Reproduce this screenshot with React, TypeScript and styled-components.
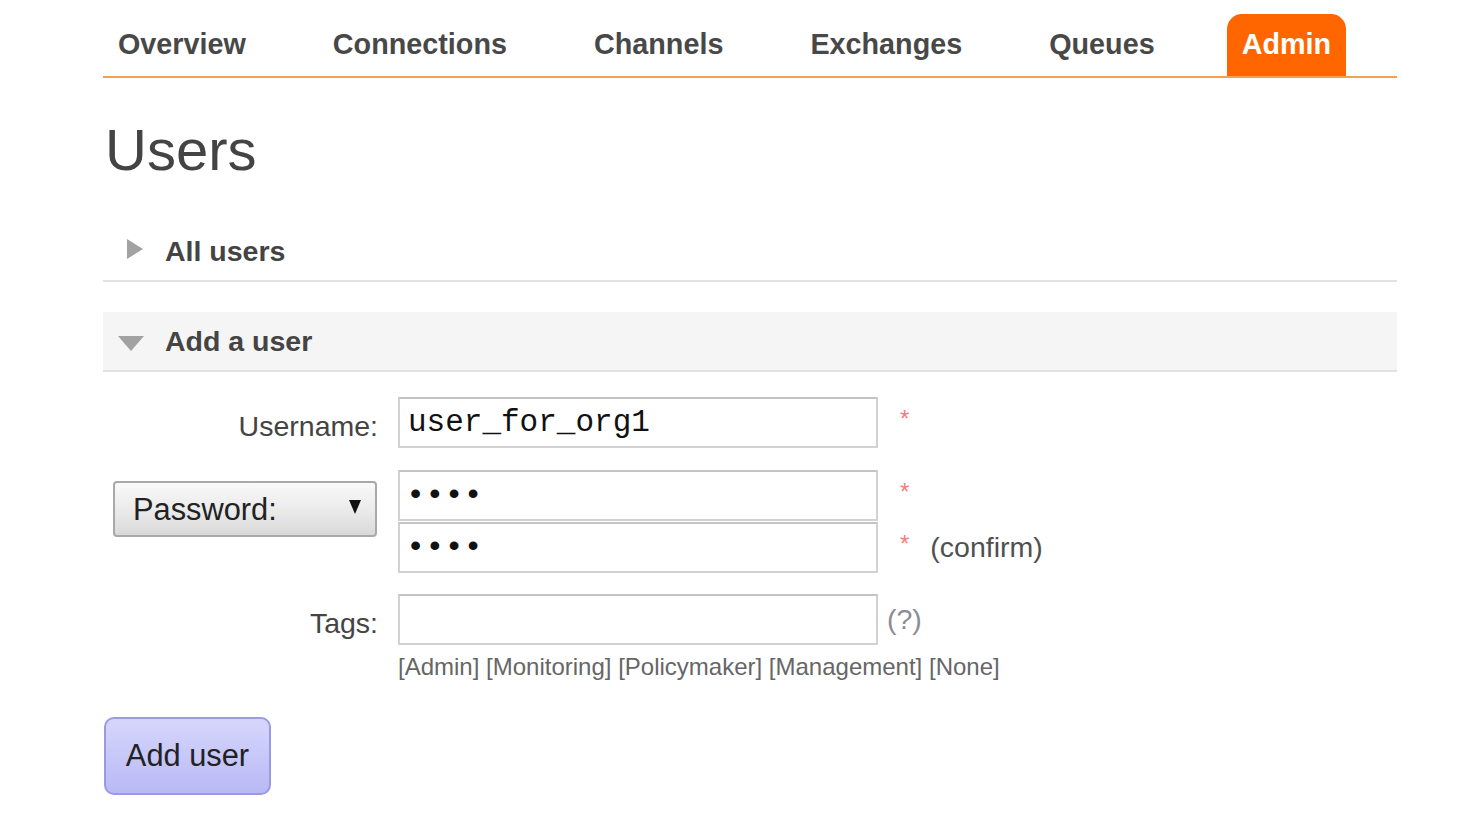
import React from 'react';
import styled, { createGlobalStyle } from 'styled-components';

const Global = createGlobalStyle`
  html, body { margin: 0; padding: 0; background: #fff; }
  body { font-family: "Liberation Sans", Arial, sans-serif; color: #484848; }
  * { box-sizing: border-box; }
`;

const Page = styled.div`
  width: 1294px;
  margin-left: 103px;
`;

const Nav = styled.nav`
  display: flex;
  padding-top: 14px;
  border-bottom: 2px solid #f5a04c;
`;

const Tab = styled.a<{ $active?: boolean }>`
  display: block;
  height: 62px;
  line-height: 60px;
  padding: 0 15px;
  margin-right: 57px;
  font-size: 28.75px;
  font-weight: bold;
  color: ${(p) => (p.$active ? '#fff' : '#484848')};
  background: ${(p) => (p.$active ? '#ff6600' : 'transparent')};
  border-radius: 15px 15px 0 0;
  text-decoration: none;
`;

const Title = styled.h1`
  margin: 37px 0 37px 2px;
  font-size: 58px;
  line-height: 70px;
  font-weight: normal;
  color: #444;
`;

const SectionHeader = styled.div<{ $open?: boolean; $gap?: number }>`
  display: flex;
  align-items: center;
  height: 60px;
  margin-top: ${(p) => p.$gap ?? 0}px;
  background: ${(p) => (p.$open ? '#f5f5f5' : 'transparent')};
  border-bottom: 2px solid #e2e2e2;
  font-size: 28.5px;
  font-weight: bold;
  color: #444;
`;

const ToggleBox = styled.span<{ $open?: boolean }>`
  display: flex;
  align-items: center;
  width: 62px;
  padding-left: ${(p) => (p.$open ? 15 : 24)}px;
  margin-top: ${(p) => (p.$open ? 4 : -4)}px;
`;

const Triangle = styled.span<{ $open?: boolean }>`
  width: 0;
  height: 0;
  ${(p) =>
    p.$open
      ? `border-top: 15px solid #a2a2a2; border-left: 13.5px solid transparent; border-right: 13.5px solid transparent;`
      : `border-left: 16px solid #a2a2a2; border-top: 10px solid transparent; border-bottom: 10px solid transparent;`}
`;

const Form = styled.div`
  padding-top: 25px;
`;

const Row = styled.div<{ $gap?: number }>`
  display: flex;
  align-items: flex-start;
  margin-bottom: ${(p) => p.$gap ?? 0}px;
`;

const Label = styled.label`
  width: 275px;
  height: 51px;
  flex: none;
  text-align: right;
  font-size: 28.5px;
  line-height: 45px;
  padding-top: 7px;
  color: #444;
`;

const LabelCell = styled.div`
  width: 275px;
  flex: none;
  padding: 11px 0 0 10px;
`;

const Fields = styled.div`
  display: flex;
  flex-direction: column;
  gap: 1px;
  margin-left: 20px;
`;

const TextInput = styled.input<{ $size?: number; $pad?: number }>`
  width: 480px;
  height: 51px;
  border: 2px solid #d2d2d2;
  border-top-color: #c4c4c4;
  padding: 0 ${(p) => p.$pad ?? 8}px;
  font-family: "Liberation Mono", "DejaVu Sans Mono", monospace;
  font-size: ${(p) => p.$size ?? 31}px;
  color: #111;
  background: #fff;
  outline: none;
`;

const Extras = styled.div`
  display: flex;
  flex-direction: column;
  gap: 1px;
`;

const ExtraLine = styled.div`
  display: flex;
  align-items: center;
  height: 51px;
`;

const Required = styled.span`
  margin: 0 0 8px 22px;
  font-size: 24px;
  color: #f47c7c;
`;

const Note = styled.span<{ $muted?: boolean; $gap?: number }>`
  margin-left: ${(p) => p.$gap ?? 21}px;
  font-size: 28.5px;
  color: ${(p) => (p.$muted ? '#8c8c94' : '#505050')};
`;

const SelectWrap = styled.div`
  position: relative;
  width: 264px;
  height: 56px;
`;

const Select = styled.select`
  appearance: none;
  width: 100%;
  height: 100%;
  padding: 0 0 0 18px;
  border: 2px solid #a9a9a9;
  border-radius: 4px;
  background: linear-gradient(#f9f9f9, #e8e8e8 60%, #d9d9d9);
  font-family: "Liberation Sans", Arial, sans-serif;
  font-size: 30.8px;
  color: #222;
  outline: none;
`;

const SelectArrow = styled.span`
  position: absolute;
  right: 16px;
  top: 19px;
  width: 0;
  height: 0;
  border-top: 14px solid #111;
  border-left: 6.5px solid transparent;
  border-right: 6.5px solid transparent;
  pointer-events: none;
`;

const TagField = styled.div`
  display: flex;
  flex-direction: column;
  margin-left: 20px;
`;

const TagInputLine = styled.div`
  display: flex;
  align-items: center;
`;

const TagLinks = styled.div`
  margin-top: 8px;
  font-size: 24px;
  line-height: 28px;
  color: #666;
`;

const TagLink = styled.a`
  color: #666;
  text-decoration: none;
`;

const SubmitButton = styled.button`
  margin: 36px 0 0 1px;
  width: 167px;
  height: 78px;
  border: 2px solid #9a9ae0;
  border-radius: 10px;
  background: linear-gradient(#d6d6fc, #b9b9f6);
  font-family: "Liberation Sans", Arial, sans-serif;
  font-size: 30.8px;
  color: #222;
  cursor: pointer;
`;

const tabs = ['Overview', 'Connections', 'Channels', 'Exchanges', 'Queues', 'Admin'];
const tagNames = ['Admin', 'Monitoring', 'Policymaker', 'Management', 'None'];

export default function App() {
  return (
    <>
      <Global />
      <Page>
        <Nav>
          {tabs.map((t) => (
            <Tab key={t} $active={t === 'Admin'} href="#">
              {t}
            </Tab>
          ))}
        </Nav>
        <Title>Users</Title>
        <SectionHeader>
          <ToggleBox>
            <Triangle />
          </ToggleBox>
          All users
        </SectionHeader>
        <SectionHeader $open $gap={30}>
          <ToggleBox $open>
            <Triangle $open />
          </ToggleBox>
          Add a user
        </SectionHeader>
        <Form>
          <Row $gap={22}>
            <Label>Username:</Label>
            <Fields>
              <TextInput defaultValue="user_for_org1" />
            </Fields>
            <Extras>
              <ExtraLine>
                <Required>*</Required>
              </ExtraLine>
            </Extras>
          </Row>
          <Row $gap={21}>
            <LabelCell>
              <SelectWrap>
                <Select defaultValue="password">
                  <option value="password">Password:</option>
                  <option value="hash">Password hash:</option>
                </Select>
                <SelectArrow />
              </SelectWrap>
            </LabelCell>
            <Fields>
              <TextInput type="password" defaultValue="test" $size={32} $pad={6} />
              <TextInput type="password" defaultValue="test" $size={32} $pad={6} />
            </Fields>
            <Extras>
              <ExtraLine>
                <Required>*</Required>
              </ExtraLine>
              <ExtraLine>
                <Required>*</Required>
                <Note>(confirm)</Note>
              </ExtraLine>
            </Extras>
          </Row>
          <Row>
            <Label>Tags:</Label>
            <TagField>
              <TagInputLine>
                <TextInput />
                <Note $muted $gap={9}>(?)</Note>
              </TagInputLine>
              <TagLinks>
                {tagNames.map((n, i) => (
                  <React.Fragment key={n}>
                    {i > 0 && ' '}
                    <TagLink href="#">[{n}]</TagLink>
                  </React.Fragment>
                ))}
              </TagLinks>
            </TagField>
          </Row>
          <SubmitButton>Add user</SubmitButton>
        </Form>
      </Page>
    </>
  );
}
